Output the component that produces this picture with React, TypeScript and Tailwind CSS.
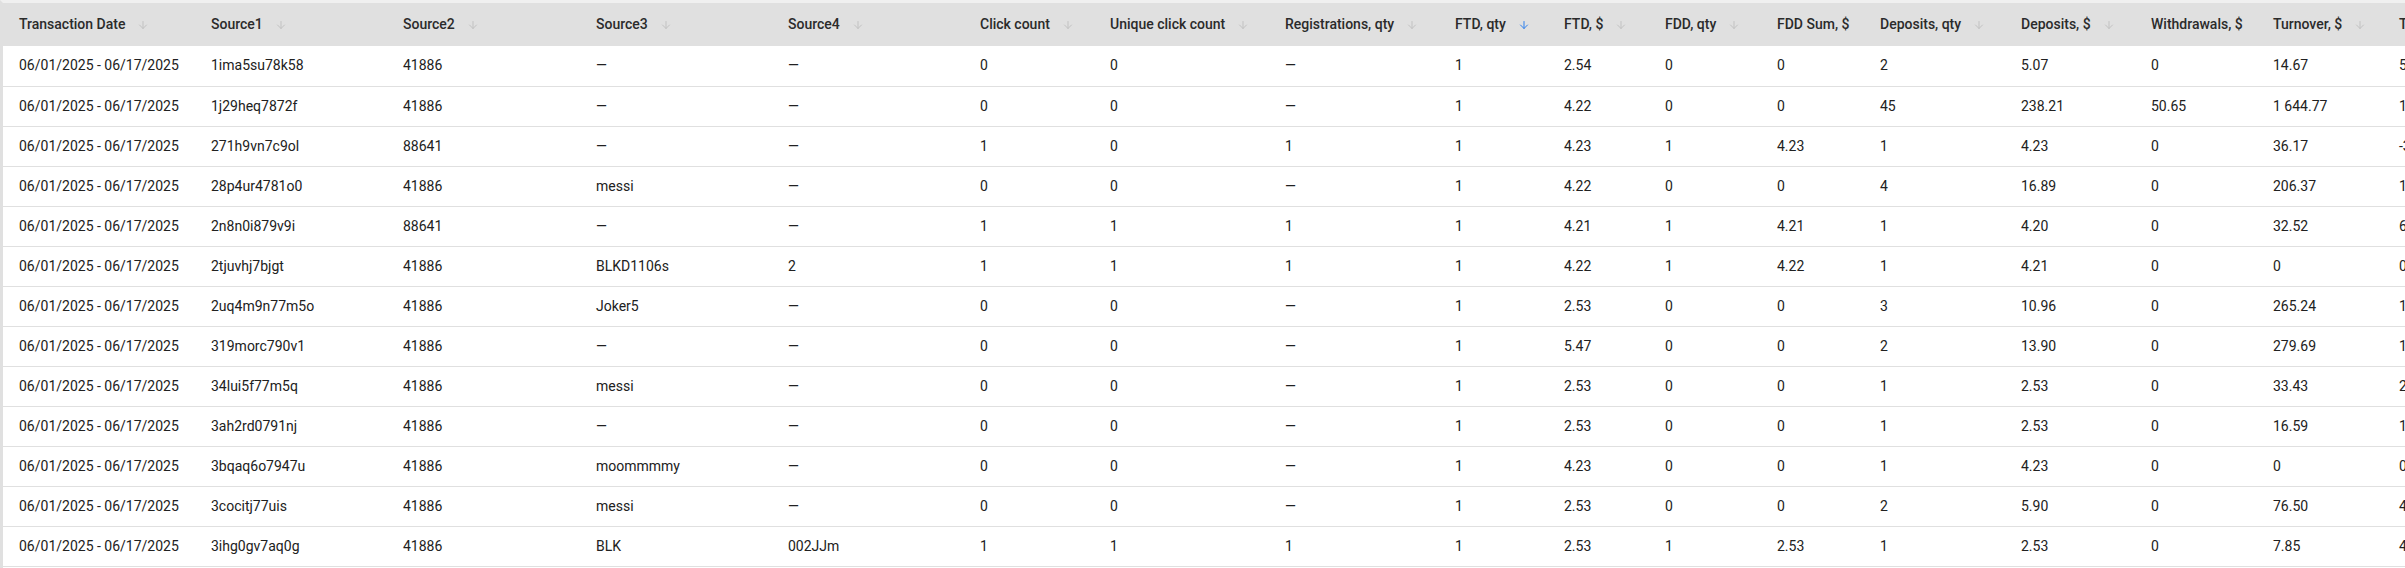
import { ArrowDown } from 'lucide-react'

type Col = { title: string; width: number; sort?: 'none' | 'active' }

const columns: Col[] = [
  { title: 'Transaction Date', width: 192 },
  { title: 'Source1', width: 192 },
  { title: 'Source2', width: 193 },
  { title: 'Source3', width: 192 },
  { title: 'Source4', width: 192 },
  { title: 'Click count', width: 130 },
  { title: 'Unique click count', width: 175 },
  { title: 'Registrations, qty', width: 170 },
  { title: 'FTD, qty', width: 109, sort: 'active' },
  { title: 'FTD, $', width: 101 },
  { title: 'FDD, qty', width: 112 },
  { title: 'FDD Sum, $', width: 103, sort: 'none' },
  { title: 'Deposits, qty', width: 141 },
  { title: 'Deposits, $', width: 130 },
  { title: 'Withdrawals, $', width: 122, sort: 'none' },
  { title: 'Turnover, $', width: 126 },
  { title: 'Total revenue, $', width: 140 },
]

const tableWidth = columns.reduce((s, c) => s + c.width, 0)

const D = '—'
const period = '06/01/2025 - 06/17/2025'

const rows: string[][] = [
  ['1ima5su78k58', '41886', D, D, '0', '0', D, '1', '2.54', '0', '0', '2', '5.07', '0', '14.67', '5.37'],
  ['1j29heq7872f', '41886', D, D, '0', '0', D, '1', '4.22', '0', '0', '45', '238.21', '50.65', '1 644.77', '1 021.30'],
  ['271h9vn7c9ol', '88641', D, D, '1', '0', '1', '1', '4.23', '1', '4.23', '1', '4.23', '0', '36.17', '-3.50'],
  ['28p4ur4781o0', '41886', 'messi', D, '0', '0', D, '1', '4.22', '0', '0', '4', '16.89', '0', '206.37', '1.77'],
  ['2n8n0i879v9i', '88641', D, D, '1', '1', '1', '1', '4.21', '1', '4.21', '1', '4.20', '0', '32.52', '6.02'],
  ['2tjuvhj7bjgt', '41886', 'BLKD1106s', '2', '1', '1', '1', '1', '4.22', '1', '4.22', '1', '4.21', '0', '0', '0'],
  ['2uq4m9n77m5o', '41886', 'Joker5', D, '0', '0', D, '1', '2.53', '0', '0', '3', '10.96', '0', '265.24', '1.11'],
  ['319morc790v1', '41886', D, D, '0', '0', D, '1', '5.47', '0', '0', '2', '13.90', '0', '279.69', '1.62'],
  ['34lui5f77m5q', '41886', 'messi', D, '0', '0', D, '1', '2.53', '0', '0', '1', '2.53', '0', '33.43', '2.38'],
  ['3ah2rd0791nj', '41886', D, D, '0', '0', D, '1', '2.53', '0', '0', '1', '2.53', '0', '16.59', '1.06'],
  ['3bqaq6o7947u', '41886', 'moommmmy', D, '0', '0', D, '1', '4.23', '0', '0', '1', '4.23', '0', '0', '0'],
  ['3cocitj77uis', '41886', 'messi', D, '0', '0', D, '1', '2.53', '0', '0', '2', '5.90', '0', '76.50', '4.12'],
  ['3ihg0gv7aq0g', '41886', 'BLK', '002JJm', '1', '1', '1', '1', '2.53', '1', '2.53', '1', '2.53', '0', '7.85', '4.45'],
]

function SortArrow({ active }: { active?: boolean }) {
  return (
    <ArrowDown
      size={12}
      strokeWidth={2}
      className={active ? 'ml-3 shrink-0 text-[#2f80ed]' : 'ml-3 shrink-0 text-[#c2c2c2]'}
    />
  )
}

export default function App() {
  return (
    <div
      className="w-[2405px] h-[568px] overflow-hidden bg-white border-t-[3px] border-l-[3px] border-t-[#f0f0f0] border-l-[#e0e0e0]"
      style={{ fontFamily: 'Roboto, "Noto Sans", sans-serif' }}
    >
      <table
        className="table-fixed border-collapse text-[14px] text-[#212121]"
        style={{ width: tableWidth, minWidth: tableWidth }}
      >
        <colgroup>
          {columns.map((c) => (
            <col key={c.title} style={{ width: c.width }} />
          ))}
        </colgroup>
        <thead>
          <tr className="h-[43px] bg-[#e0e0e0]">
            {columns.map((c) => (
              <th key={c.title} className="px-4 text-left font-medium text-[#2b2b2b] whitespace-nowrap overflow-hidden">
                <div className="flex items-center">
                  <span>{c.title}</span>
                  {c.sort !== 'none' && <SortArrow active={c.sort === 'active'} />}
                </div>
              </th>
            ))}
          </tr>
        </thead>
        <tbody>
          {rows.map((r, i) => (
            <tr key={i} className="h-[40px] border-b border-[#e0e0e0]">
              <td className="px-4 whitespace-nowrap overflow-hidden">{period}</td>
              {r.map((v, j) => (
                <td key={j} className="px-4 whitespace-nowrap overflow-hidden">
                  {v}
                </td>
              ))}
            </tr>
          ))}
        </tbody>
      </table>
    </div>
  )
}
